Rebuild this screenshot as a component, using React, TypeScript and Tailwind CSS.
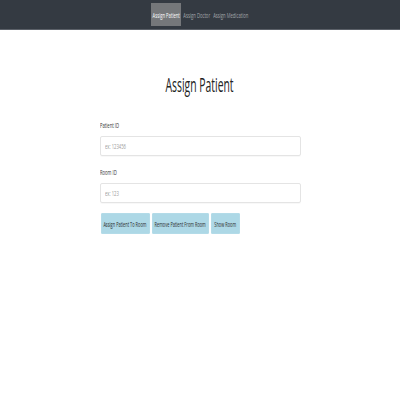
import clsx from 'clsx';

const font = { fontFamily: '"Open Sans", "Liberation Sans", sans-serif' };

function Squeeze({ children, className, tight }: { children: React.ReactNode; className?: string; tight?: boolean }) {
  return (
    <span className={clsx('inline-block whitespace-nowrap', tight ? 'scale-x-[0.49]' : 'scale-x-[0.52]', className)}>
      {children}
    </span>
  );
}

const navItems = [
  { label: 'Assign Patient', w: 'w-[30px]', active: true },
  { label: 'Assign Doctor', w: 'w-[31px]', active: false },
  { label: 'Assign Medication', w: 'w-[37px]', active: false },
];

const buttons = [
  { label: 'Assign Patient To Room', w: 'w-[49px]' },
  { label: 'Remove Patient From Room', w: 'w-[57px]' },
  { label: 'Show Room', w: 'w-[29px]' },
];

export default function App() {
  return (
    <div className="min-h-[400px] w-[400px] bg-white" style={font}>
      <nav className="flex h-[30px] items-start justify-center border-b border-[#5b6068] bg-[#343a42] pt-[3px]">
        {navItems.map((item) => (
          <a
            key={item.label}
            className={clsx(
              'flex h-[23px] items-center justify-center text-[8px]',
              item.w,
              item.active ? 'bg-[#75777a] text-white' : 'text-[#a3a6aa]'
            )}
          >
            <Squeeze>{item.label}</Squeeze>
          </a>
        ))}
      </nav>

      <div className="mx-auto w-[201px] pt-[43px]">
        <h1 className="flex h-[24px] items-center justify-center text-[20px] leading-none text-[#222]">
          <Squeeze>Assign Patient</Squeeze>
        </h1>

        <label className="mt-[23px] block h-[10px] text-[8px] leading-[10px] text-[#333]">
          <Squeeze className="origin-left">Patient ID</Squeeze>
        </label>
        <div className="mt-[6px] flex h-[20px] items-center rounded-[2px] border border-[#e4e4e4] pl-[4px] text-[8px] text-[#9a9a9a] shadow-[0_1px_1px_rgba(0,0,0,0.03)]">
          <Squeeze className="origin-left">ex: 123456</Squeeze>
        </div>

        <label className="mt-[11px] block h-[10px] text-[8px] leading-[10px] text-[#333]">
          <Squeeze className="origin-left">Room ID</Squeeze>
        </label>
        <div className="mt-[6px] flex h-[20px] items-center rounded-[2px] border border-[#e4e4e4] pl-[4px] text-[8px] text-[#9a9a9a] shadow-[0_1px_1px_rgba(0,0,0,0.03)]">
          <Squeeze className="origin-left">ex: 123</Squeeze>
        </div>

        <div className="mt-[10px] flex gap-[2px] pl-[1px]">
          {buttons.map((b) => (
            <button
              key={b.label}
              className={clsx(
                'flex h-[21px] items-center justify-center overflow-visible rounded-[1px] border border-[#b3dbe8] bg-[#add8e6] text-[8px] text-[#2a2a2a]',
                b.w
              )}
            >
              <Squeeze tight>{b.label}</Squeeze>
            </button>
          ))}
        </div>
      </div>
    </div>
  );
}
